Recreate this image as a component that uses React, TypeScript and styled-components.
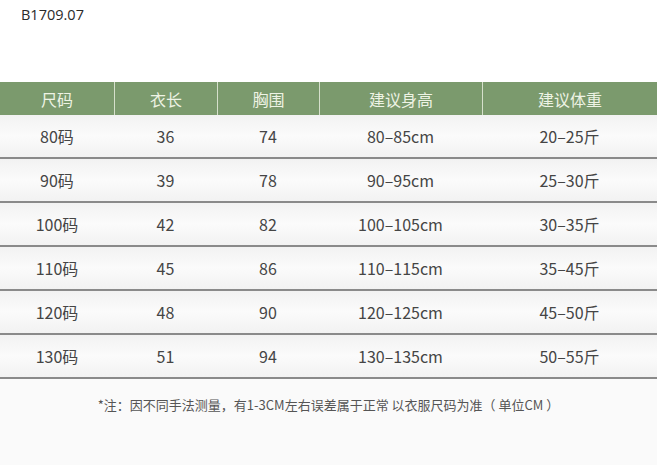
import * as React from 'react';
import styled, { createGlobalStyle } from 'styled-components';

const GlobalStyle = createGlobalStyle`
  html, body {
    margin: 0;
    padding: 0;
    background: #fafafa;
  }
  body {
    font-family: 'Noto Sans CJK SC', 'Noto Sans', sans-serif;
  }
`;

const header = ['尺码', '衣长', '胸围', '建议身高', '建议体重'];

const rows = [
  ['80码', '36', '74', '80–85cm', '20–25斤'],
  ['90码', '39', '78', '90–95cm', '25–30斤'],
  ['100码', '42', '82', '100–105cm', '30–35斤'],
  ['110码', '45', '86', '110–115cm', '35–45斤'],
  ['120码', '48', '90', '120–125cm', '45–50斤'],
  ['130码', '51', '94', '130–135cm', '50–55斤'],
];

export default function App() {
  return (
    <>
      <GlobalStyle />
      <Page>
        <Code>B1709.07</Code>
        <Table>
          <HeadRow>
            {header.map((h) => (
              <HeadCell key={h}>{h}</HeadCell>
            ))}
          </HeadRow>
          {rows.map((r) => (
            <Row key={r[0]}>
              {r.map((c, i) => (
                <Cell key={i}>{c}</Cell>
              ))}
            </Row>
          ))}
        </Table>
        <Note>*注：因不同手法测量，有1-3CM左右误差属于正常 以衣服尺码为准（ 单位CM ）</Note>
      </Page>
    </>
  );
}

const Page = styled.div`
  width: 657px;
  height: 465px;
  background: #fafafa;
  overflow: hidden;
`;

const Code = styled.div`
  height: 82px;
  box-sizing: border-box;
  padding: 5px 0 0 21px;
  font-family: 'Open Sans', 'Liberation Sans', sans-serif;
  font-size: 14.5px;
  color: #2a2a2a;
  background: #ffffff;
`;

const Table = styled.div`
  display: flex;
  flex-direction: column;
`;

const cols = '114px 103px 102px 163px 1fr';

const HeadRow = styled.div`
  display: grid;
  grid-template-columns: ${cols};
  height: 33px;
  background: #7b9a6d;
`;

const HeadCell = styled.div`
  display: flex;
  align-items: center;
  justify-content: center;
  color: #eef3e4;
  font-size: 16px;
  border-left: 1px solid #d6e0cc;
  &:first-child {
    border-left: none;
  }
`;

const Row = styled.div`
  display: grid;
  grid-template-columns: ${cols};
  height: 44px;
  box-sizing: border-box;
  border-bottom: 2px solid #8a8a8a;
  background: linear-gradient(#f2f2f2, #fbfbfb 50%, #f2f2f2);
  &:first-of-type {
    height: 45px;
  }
`;

const Cell = styled.div`
  display: flex;
  align-items: center;
  justify-content: center;
  font-size: 16px;
  color: #454545;
`;

const Note = styled.div`
  margin-top: 16px;
  text-align: center;
  font-size: 13px;
  color: #555;
`;
